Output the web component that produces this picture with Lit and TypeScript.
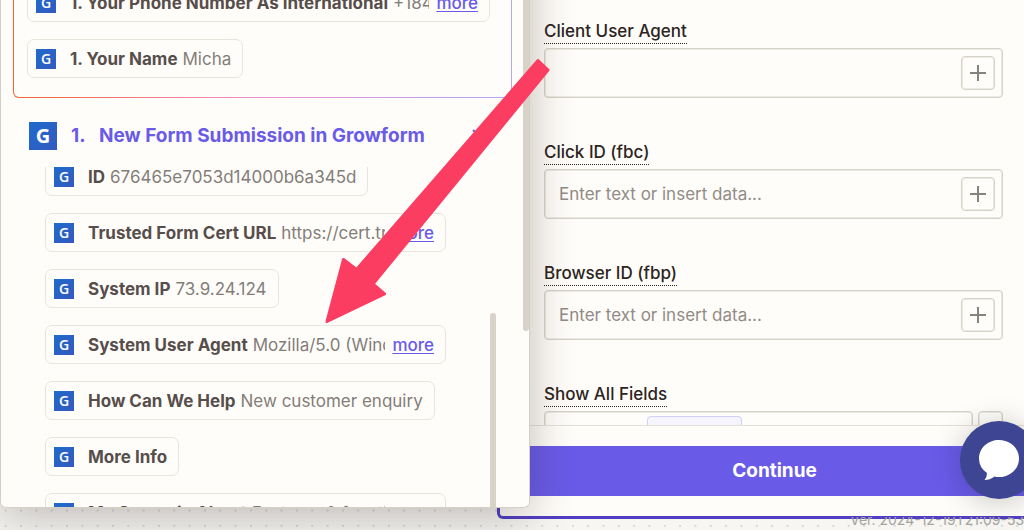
import { LitElement, html, css, svg, nothing } from "lit";
import { customElement, property } from "lit/decorators.js";

@customElement("growform-logo")
class GrowformLogo extends LitElement {
  static styles = css`
    :host {
      display: flex;
      flex: none;
      align-items: center;
      justify-content: center;
      width: 20px;
      height: 20px;
      background: linear-gradient(135deg, #1f6bcb, #3459c0);
      color: #fff;
      font: 600 14px/20px "Open Sans", sans-serif;
    }
    :host([large]) {
      width: 28px;
      height: 28px;
      font: 700 20px/28px "Open Sans", sans-serif;
    }
  `;
  render() {
    return html`G`;
  }
}

@customElement("data-pill")
class DataPill extends LitElement {
  @property() label = "";
  @property() value = "";
  @property({ type: Boolean }) more = false;

  static styles = css`
    :host {
      display: flex;
      flex: none;
      box-sizing: border-box;
      align-items: center;
      height: 39px;
      padding: 0 11px 0 8px;
      border: 1px solid #e8e6dc;
      border-radius: 7px;
      font-size: 17px;
      line-height: 24px;
      white-space: nowrap;
    }
    .label {
      margin: 0 5px 0 14px;
      font-weight: 700;
      color: #574e4c;
    }
    .label:last-child {
      margin-right: 0;
    }
    .value {
      flex: 1 1 0;
      min-width: 0;
      overflow: hidden;
      color: #837d79;
    }
    :host(:not([more])) .value {
      flex: none;
    }
    a {
      margin-left: 7px;
      color: #695be8;
      font-weight: 500;
      text-underline-offset: 2px;
    }
  `;
  render() {
    return html`<growform-logo></growform-logo>
      <span class="label">${this.label}</span>
      ${this.value ? html`<span class="value">${this.value}</span>` : nothing}
      ${this.more ? html`<a href="#more">more</a>` : nothing}`;
  }
}

const plus = svg`<path d="M9 1v16M1 9h16" fill="none" stroke="#88827e" stroke-width="2" />`;

@customElement("app-root")
class AppRoot extends LitElement {
  static styles = css`
    :host {
      display: block;
      position: relative;
      box-sizing: border-box;
      height: 100vh;
      overflow: hidden;
      padding: 0 0 11px 497px;
      background: radial-gradient(circle, #d9d7d2 1px, transparent 1.5px) -2px -3px / 15.33px 15.33px #f7f6f3;
      font-family: Inter, "Liberation Sans", sans-serif;
      color: #2d2422;
    }
    .version {
      position: absolute;
      left: 850px;
      bottom: 0;
      display: flex;
      align-items: flex-end;
      height: 13px;
      overflow: hidden;
      color: #a5a3a1;
      font-size: 14px;
      line-height: 20px;
      white-space: nowrap;
    }
    .panel {
      position: relative;
      display: flex;
      flex-direction: column;
      box-sizing: border-box;
      height: 100%;
      margin-right: -28px;
      border: 3px solid #503fc4;
      border-top: 0;
      border-radius: 0 0 6px 6px;
      background: #fffdf9;
    }
    .fields {
      display: flex;
      flex: 1;
      flex-direction: column;
      gap: 42px;
      min-height: 0;
      overflow: hidden;
      padding: 19px 46px 0 44px;
    }
    .field {
      display: flex;
      flex: none;
      flex-direction: column;
      align-items: flex-start;
      gap: 4px;
    }
    label {
      border-bottom: 1px dotted #2d2422;
      font-size: 17px;
      font-weight: 500;
      line-height: 24px;
    }
    .box {
      display: flex;
      box-sizing: border-box;
      align-items: center;
      align-self: stretch;
      height: 50px;
      padding: 0 7px 0 14px;
      border: 1px solid #d5d3c9;
      border-radius: 4px;
      box-shadow: inset 0 0 0 1px #eceae2;
    }
    input {
      flex: 1;
      min-width: 0;
      padding: 0;
      border: 0;
      outline: 0;
      background: none;
      font: 400 17px/24px Inter, sans-serif;
      color: #2d2422;
    }
    input::placeholder {
      color: #918b87;
      opacity: 1;
    }
    .square {
      display: flex;
      flex: none;
      box-sizing: border-box;
      align-items: center;
      justify-content: center;
      width: 34px;
      height: 34px;
      padding: 0;
      border: 1px solid #d5d3c9;
      border-radius: 4px;
      background: #fffdf9;
      box-shadow: inset 0 0 0 1px #eceae2;
    }
    .pair {
      display: flex;
      gap: 5px;
      align-self: stretch;
    }
    .pair .box {
      flex: 1;
      min-width: 0;
      padding-left: 102px;
    }
    .pair .square {
      width: 25px;
    }
    .token {
      flex: none;
      align-self: flex-start;
      box-sizing: border-box;
      width: 95px;
      height: 36px;
      margin-top: 4px;
      border: 1px solid #cfcdfa;
      border-radius: 4px;
      background: #f6f4fd;
    }
    .footer {
      padding: 20px 15px;
      border-top: 1px solid #e3e1da;
    }
    .continue {
      display: block;
      width: 100%;
      height: 50px;
      border: 0;
      background: #695be8;
      color: #fff;
      font: 700 19px/24px Inter, sans-serif;
    }
    .picker {
      position: absolute;
      top: 0;
      bottom: 22px;
      left: 0;
      display: flex;
      flex-direction: column;
      box-sizing: border-box;
      width: 530px;
      overflow: hidden;
      padding: 0 17px 0 12px;
      border: 1px solid #d5d0c6;
      border-top: 0;
      border-radius: 0 0 6px 6px;
      background: #fffdf9;
    }
    .shade {
      position: absolute;
      top: -60px;
      bottom: 22px;
      left: 0;
      width: 530px;
      border-radius: 6px;
      box-shadow: 0 8px 45px rgba(45, 36, 34, 0.3);
    }
    .suggested {
      display: flex;
      flex: none;
      flex-direction: column;
      align-items: flex-start;
      gap: 17px;
      margin-top: -20px;
      padding: 2px 13px 19px;
      border: 1px solid transparent;
      border-radius: 6px;
      background:
        linear-gradient(#fffdf9, #fffdf9) padding-box,
        linear-gradient(90deg, #f5652a, #ee8fd2 50%, #b3a6f5) border-box;
    }
    .suggested [more] {
      width: 463px;
    }
    .group {
      display: flex;
      flex: none;
      align-items: center;
      margin: 24px 0 17px;
      padding: 0 25px 0 16px;
      color: #695be8;
      font-size: 19px;
      font-weight: 700;
      line-height: 28px;
    }
    .group h2 {
      flex: 1;
      margin: 0;
      font: inherit;
    }
    .number {
      width: 28px;
      margin-left: 14px;
    }
    .toggle {
      display: flex;
      padding: 0;
      border: 0;
      background: none;
    }
    .list {
      display: flex;
      flex: 1;
      flex-direction: column;
      align-items: flex-start;
      gap: 17px;
      min-height: 0;
      overflow: hidden;
      padding-left: 32px;
    }
    .list data-pill:first-child {
      margin-top: -10px;
    }
    .list [more] {
      width: 401px;
    }
    .bar {
      position: absolute;
      border-radius: 3px;
      background: #d7d3c9;
    }
    .outer {
      top: -6px;
      right: 0;
      width: 6px;
      height: 337px;
    }
    .inner {
      top: 313px;
      right: 33px;
      bottom: -6px;
      width: 6px;
    }
    .arrow {
      position: absolute;
      top: 0;
      left: 0;
      pointer-events: none;
    }
    .chat {
      position: absolute;
      right: -14px;
      bottom: 31px;
      display: flex;
      align-items: center;
      justify-content: center;
      width: 78px;
      height: 78px;
      padding: 0;
      border: 0;
      border-radius: 50%;
      background: #3e4592;
      box-shadow: 0 3px 30px rgba(0, 0, 0, 0.22);
    }
  `;

  private field(id: string, label: string, placeholder: string) {
    return html`<div class="field">
      <label for=${id}>${label}</label>
      <div class="box">
        <input id=${id} type="text" placeholder=${placeholder} />
        <button class="square" aria-label="Insert data">
          <svg width="18" height="18" viewBox="0 0 18 18">${plus}</svg>
        </button>
      </div>
    </div>`;
  }

  render() {
    const hint = "Enter text or insert data...";
    return html`
      <section class="panel">
        <div class="fields">
          ${this.field("agent", "Client User Agent", "")}
          ${this.field("fbc", "Click ID (fbc)", hint)}
          ${this.field("fbp", "Browser ID (fbp)", hint)}
          <div class="field">
            <label for="all">Show All Fields</label>
            <div class="pair">
              <div class="box">
                <span class="token"></span>
                <input id="all" type="text" />
              </div>
              <button class="square" aria-label="Options"></button>
            </div>
          </div>
        </div>
        <div class="footer"><button class="continue">Continue</button></div>
      </section>
      <div class="version">Ver. 2024-12-19T21:09-53384</div>

      <div class="shade"></div>
      <aside class="picker">
        <div class="suggested">
          <data-pill label="1. Your Phone Number As International" value="+184" more></data-pill>
          <data-pill label="1. Your Name" value="Micha"></data-pill>
        </div>
        <header class="group">
          <growform-logo large></growform-logo>
          <span class="number">1.</span>
          <h2>New Form Submission in Growform</h2>
          <button class="toggle" aria-label="Collapse">
            <svg width="16" height="16" viewBox="0 0 16 16">
              <path d="M2 2l6 6 6-6" fill="none" stroke="#695be8" stroke-width="2" />
            </svg>
          </button>
        </header>
        <div class="list">
          <data-pill label="ID" value="676465e7053d14000b6a345d"></data-pill>
          <data-pill label="Trusted Form Cert URL" value="https://cert.trustedform.com" more></data-pill>
          <data-pill label="System IP" value="73.9.24.124"></data-pill>
          <data-pill label="System User Agent" value="Mozilla/5.0 (Windows NT 10.0)" more></data-pill>
          <data-pill label="How Can We Help" value="New customer enquiry"></data-pill>
          <data-pill label="More Info"></data-pill>
          <data-pill label="My Scenario About" value="Features &amp; functions" more></data-pill>
        </div>
        <div class="bar outer"></div>
        <div class="bar inner"></div>
      </aside>

      <svg class="arrow" width="560" height="340" viewBox="0 0 560 340">
        <path
          d="M538 60.500L548 70L373 284L384.500 294L327 321.500L343.500 259.500L356.500 269.500Z"
          fill="#fc3d62"
          stroke="#fc3d62"
          stroke-width="3"
          stroke-linejoin="round"
        />
      </svg>

      <button class="chat" aria-label="Open chat">
        <svg width="40" height="40" viewBox="0 0 40 40">
          <path
            d="M20 0C31 0 40 8 40 18.500S31 37 20 37Q17.500 37 15.500 36.500Q11 40 5.500 40Q8 37.500 8 33Q0 27.500 0 18.500C0 8 9 0 20 0Z"
            fill="#fff"
          />
        </svg>
      </button>
    `;
  }
}
